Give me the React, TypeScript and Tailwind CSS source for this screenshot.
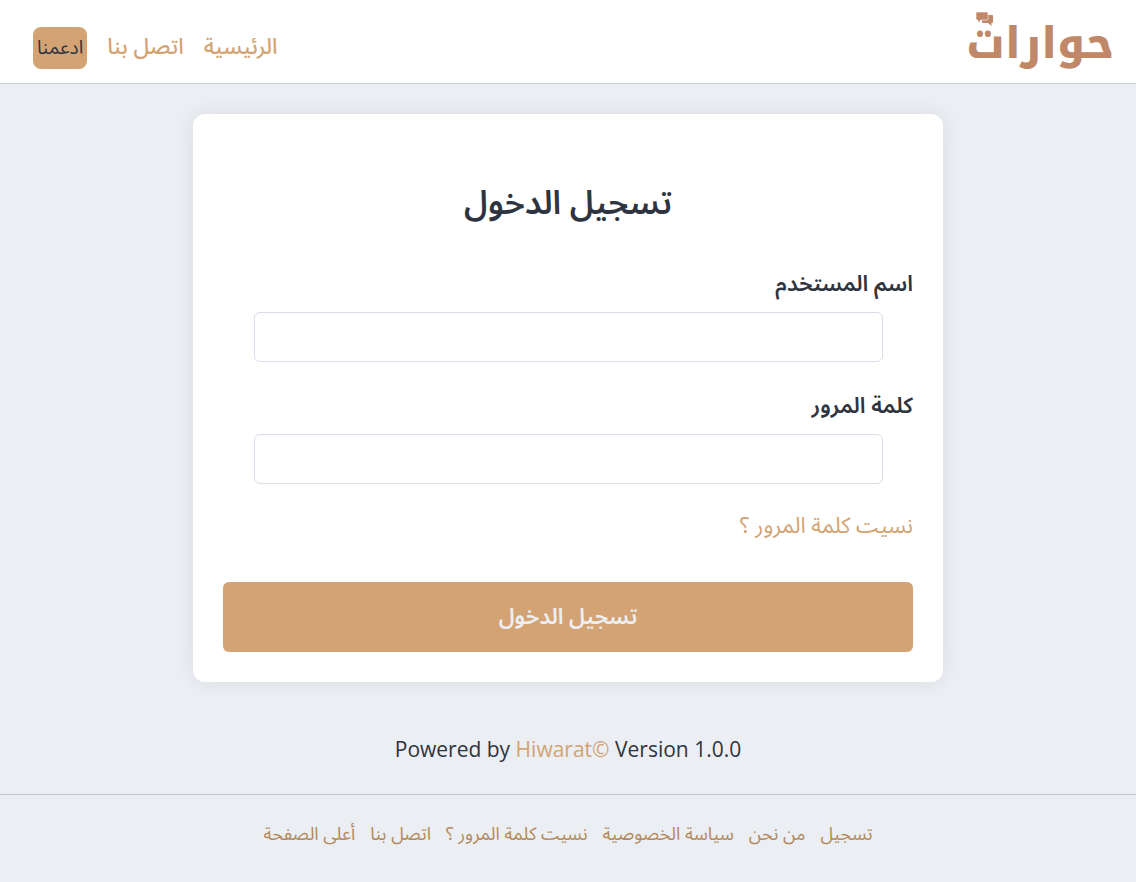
const footerLinks = [
  'تسجيل',
  'من نحن',
  'سياسة الخصوصية',
  'نسيت كلمة المرور ؟',
  'اتصل بنا',
  'أعلى الصفحة',
];

function Logo() {
  return (
    <a
      href="#"
      className="relative flex items-center pt-1 font-['Noto_Kufi_Arabic','DejaVu_Sans',sans-serif] text-[43px] leading-[72px] font-extrabold text-[#c08768]"
    >
      حوارات
      <svg viewBox="0 0 17 14" className="absolute top-2 left-2.5 h-[14px] w-[17px]" aria-hidden="true">
        <path fill="currentColor" d="M6 3h10q1 0 1 1v6q0 1-1 1h-.5v3L12 11H7q-1 0-1-1z" />
        <path fill="currentColor" stroke="#fff" strokeWidth=".6" d="M1 0h10q1 0 1 1v6q0 1-1 1H5l-3 3V8H1Q0 8 0 7V1q0-1 1-1z" />
      </svg>
    </a>
  );
}

function Field({ id, label, type }: { id: string; label: string; type: string }) {
  return (
    <div className="mb-6">
      <label htmlFor={id} className="block h-12 text-[22px] leading-9 font-semibold">
        {label}
      </label>
      <div className="pr-[30px] pl-[31px]">
        <input
          id={id}
          type={type}
          className="block h-[50px] w-full rounded-md border border-[#d8dee9] bg-white px-3 outline-none"
        />
      </div>
    </div>
  );
}

export default function App() {
  return (
    <div
      dir="rtl"
      className="flex min-h-screen flex-col bg-[#ebeef3] font-['Open_Sans','Noto_Sans_Arabic','DejaVu_Sans',sans-serif] text-[#2e3440]"
    >
      <header className="flex h-[84px] items-center justify-between border-b border-[#c9cdd3] bg-white pr-[22px] pl-[33px]">
        <Logo />
        <nav className="flex items-start gap-5 pt-3 text-[22px] leading-9 font-medium text-[#d3a374]">
          <a href="#">الرئيسية</a>
          <a href="#">اتصل بنا</a>
          <a
            href="#"
            className="h-[42px] rounded-lg bg-[#d3a374] px-1 text-[19px] leading-10 font-normal text-[#2e3440]"
          >
            ادعمنا
          </a>
        </nav>
      </header>

      <main className="px-4 pt-[30px]">
        <form className="mx-auto max-w-[750px] rounded-xl bg-white p-[30px] shadow-[0_0_20px_rgba(0,0,0,0.08)]">
          <h1 className="pt-7 pb-8 text-center text-[33px] leading-[60px] font-semibold">تسجيل الدخول</h1>
          <Field id="username" label="اسم المستخدم" type="text" />
          <Field id="password" label="كلمة المرور" type="password" />
          <a href="#" className="block text-[22px] leading-8 text-[#d3a374]">
            نسيت كلمة المرور ؟
          </a>
          <button
            type="submit"
            className="mt-[42px] block h-[70px] w-full rounded-md bg-[#d3a374] pb-1 text-[22px] font-semibold text-[#eceff4]"
          >
            تسجيل الدخول
          </button>
        </form>
      </main>

      <p dir="ltr" className="pt-[50px] pb-[28px] text-center text-[21px] leading-[34px]">
        Powered by{' '}
        <a href="#" className="text-[#d3a374]">
          Hiwarat©
        </a>{' '}
        Version 1.0.0
      </p>

      <footer className="flex flex-wrap justify-center gap-x-[15px] border-t border-[#bfc3ca] pt-[22px] pb-7 text-[18px] leading-8 text-[#b48a5a]">
        {footerLinks.map((text) => (
          <a key={text} href="#">
            {text}
          </a>
        ))}
      </footer>
    </div>
  );
}
